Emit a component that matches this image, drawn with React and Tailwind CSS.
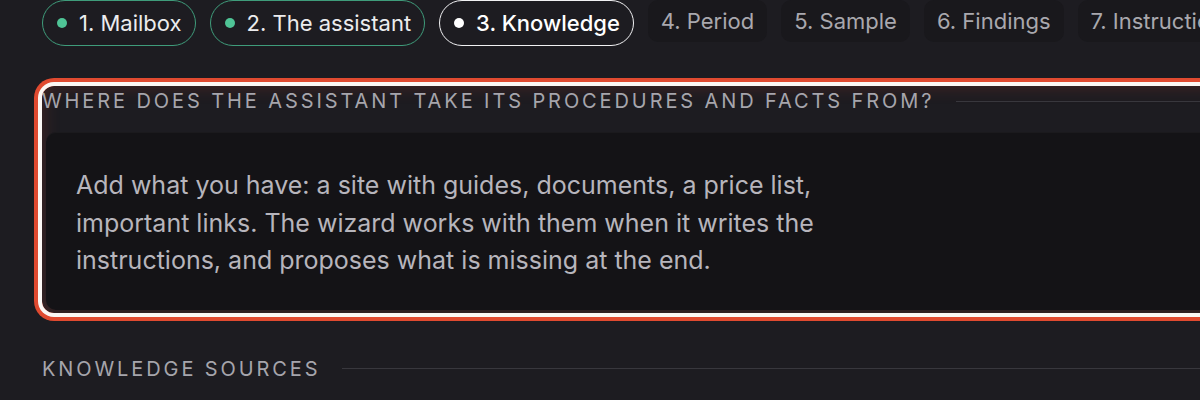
import React from "react";

const doneSteps = ["1. Mailbox", "2. The assistant"];
const laterSteps = ["4. Period", "5. Sample", "6. Findings", "7. Instructions"];

function SectionHeading({ children }) {
  return (
    <div className="flex items-center gap-[22px]">
      <span className="shrink-0 text-[20px] leading-6 uppercase tracking-[2.9px] text-[#a6a5ac]">
        {children}
      </span>
      <span className="h-px flex-1 bg-[#38373d]" />
    </div>
  );
}

export default function App() {
  return (
    <div className="h-[400px] w-[1200px] overflow-hidden bg-[#1d1c21] pl-[42px] font-['Inter',sans-serif]">
      <nav className="flex items-start gap-[14px] whitespace-nowrap">
        {doneSteps.map((label) => (
          <div
            key={label}
            className="flex h-[46px] items-center gap-3 rounded-full border-[1.5px] border-[#3f9c7b] pl-[14px] pr-[13px] text-[22px] text-[#ececee]"
          >
            <span className="h-[10px] w-[10px] rounded-full bg-[#4fc496]" />
            {label}
          </div>
        ))}
        <div className="flex h-[46px] items-center gap-3 rounded-full border-[1.5px] border-[#f1f1f3] pl-[14px] pr-[13px] text-[22px] font-medium text-white">
          <span className="h-[10px] w-[10px] rounded-full bg-white" />
          3. Knowledge
        </div>
        {laterSteps.map((label) => (
          <div
            key={label}
            className="flex h-[42px] items-center rounded-[10px] bg-[#19181c] px-[13px] text-[22px] text-[#a9a8ae]"
          >
            {label}
          </div>
        ))}
      </nav>

      {/* highlighted section (tour spotlight) */}
      <section className="relative mt-[40px] w-[1240px] rounded-[12px] pt-[3px] pb-[3px] shadow-[0_0_0_4px_#fbf7f4,0_0_0_8px_#e04a30,inset_0_0_18px_rgba(224,74,48,0.22)]">
        <SectionHeading>Where does the assistant take its procedures and facts from?</SectionHeading>
        <div className="ml-[4px] mt-[19px] rounded-[10px] bg-[#141316] pl-[30px] pt-[35px] pb-[30px] shadow-[inset_0_1px_0_rgba(255,255,255,0.03)]">
          <p className="max-w-[780px] text-[25px] leading-[37.5px] text-[#b7b5bc]">
            Add what you have: a site with guides, documents, a price list,
            important links. The wizard works with them when it writes the
            instructions, and proposes what is missing at the end.
          </p>
        </div>
      </section>

      <div className="mt-[44px] w-[1240px]">
        <SectionHeading>Knowledge sources</SectionHeading>
      </div>
    </div>
  );
}
